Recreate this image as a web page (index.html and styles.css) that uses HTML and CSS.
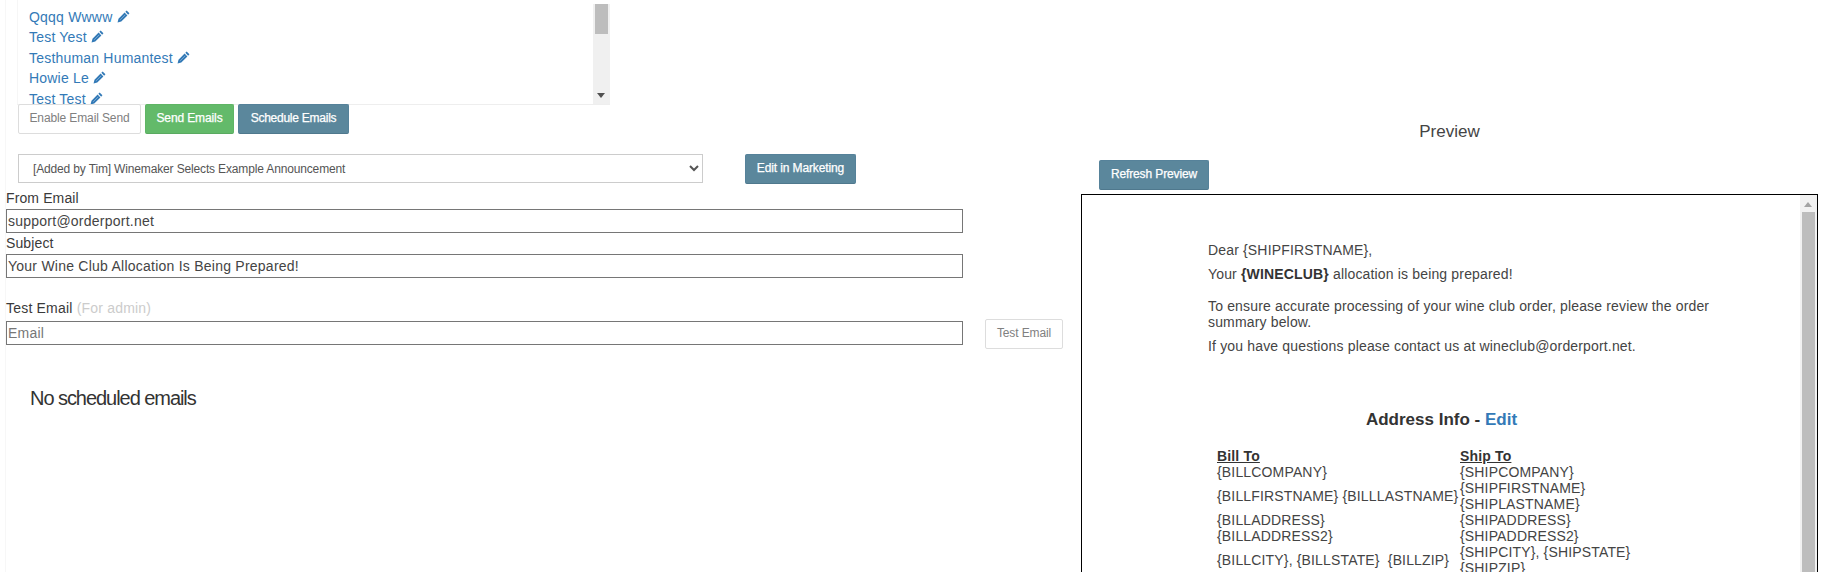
FILE: index.html
```html
<!DOCTYPE html>
<html lang="en">
<head>
<meta charset="utf-8">
<title>Email Preview</title>
<link rel="stylesheet" href="styles.css">
</head>
<body>
<svg class="defs" width="0" height="0" aria-hidden="true">
  <symbol id="pencil" viewBox="0 0 14 14">
    <path d="M10.4 .6 13.4 3.6 12 5 9 2Z M8.2 2.8 11.2 5.8 4.6 12.4 .6 13.4 1.6 9.4Z"/>
    <path class="slit" d="M3.4 10.6 8.8 5.2"/>
  </symbol>
</svg>
<div class="page">
  <section class="left">
    <div class="recipients">
      <ul class="names">
        <li><a href="#">Qqqq Wwww <svg class="pencil"><use href="#pencil"/></svg></a></li>
        <li><a href="#">Test Yest <svg class="pencil"><use href="#pencil"/></svg></a></li>
        <li><a href="#">Testhuman Humantest <svg class="pencil"><use href="#pencil"/></svg></a></li>
        <li><a href="#">Howie Le <svg class="pencil"><use href="#pencil"/></svg></a></li>
        <li><a href="#">Test Test <svg class="pencil"><use href="#pencil"/></svg></a></li>
      </ul>
      <div class="listbar">
        <div class="listthumb"></div>
        <div class="arrow-down"></div>
      </div>
    </div>
    <div class="actions">
      <button class="btn btn-plain w-enable">Enable Email Send</button>
      <button class="btn btn-green w-send">Send Emails</button>
      <button class="btn btn-teal w-schedule">Schedule Emails</button>
    </div>
    <div class="template-row">
      <select class="template">
        <option>[Added by Tim] Winemaker Selects Example Announcement</option>
      </select>
      <button class="btn btn-teal w-edit">Edit in Marketing</button>
    </div>
    <label class="lbl">From Email</label>
    <input class="field" type="text" value="support@orderport.net">
    <label class="lbl">Subject</label>
    <input class="field" type="text" value="Your Wine Club Allocation Is Being Prepared!">
    <label class="lbl lbl-test">Test Email <span class="muted">(For admin)</span></label>
    <div class="test-row">
      <input class="field" type="text" placeholder="Email">
      <button class="btn btn-plain w-test">Test Email</button>
    </div>
    <h4 class="none">No scheduled emails</h4>
  </section>
  <section class="right">
    <div class="preview-title">Preview</div>
    <button class="btn btn-teal refresh">Refresh Preview</button>
    <div class="frame">
      <div class="mail">
        <p class="p1">Dear {SHIPFIRSTNAME},</p>
        <p class="p2">Your <b>{WINECLUB}</b> allocation is being prepared!</p>
        <p class="p3">To ensure accurate processing of your wine club order, please review the order summary below.</p>
        <p class="p4">If you have questions please contact us at wineclub@orderport.net.</p>
        <h3 class="addr">Address Info - <a href="#">Edit</a></h3>
        <table class="addr-table">
          <tr><th>Bill To</th><th>Ship To</th></tr>
          <tr><td>{BILLCOMPANY}</td><td>{SHIPCOMPANY}</td></tr>
          <tr><td>{BILLFIRSTNAME} {BILLLASTNAME}</td><td>{SHIPFIRSTNAME} {SHIPLASTNAME}</td></tr>
          <tr><td>{BILLADDRESS}</td><td>{SHIPADDRESS}</td></tr>
          <tr><td>{BILLADDRESS2}</td><td>{SHIPADDRESS2}</td></tr>
          <tr><td>{BILLCITY}, {BILLSTATE}&nbsp; {BILLZIP}</td><td>{SHIPCITY}, {SHIPSTATE} {SHIPZIP}</td></tr>
        </table>
      </div>
      <div class="framebar">
        <div class="arrow-up"></div>
        <div class="framethumb"></div>
      </div>
    </div>
  </section>
</div>
</body>
</html>
```
FILE: styles.css
```css
* { box-sizing: border-box; }
html, body { margin: 0; padding: 0; height: 572px; overflow: hidden; background: #fff; }
body { font-family: "Liberation Sans", Arial, sans-serif; font-size: 14px; letter-spacing: 0.12px; color: #3a3a3a; }
.defs { position: absolute; }
.page { display: flex; height: 572px; overflow: hidden; }
.left { width: 1076px; flex: none; margin-left: 5px; border-left: 1px solid #f7f7f7; }
.right { flex: 1; display: flex; flex-direction: column; margin-right: 5px; min-width: 0; }

.recipients { display: flex; width: 593px; height: 105px; margin-left: 11px; border-bottom: 1px solid #eee; border-left: 1px solid #f6f6f6; overflow: hidden; }
.names { flex: 1; list-style: none; margin: 0; padding: 6.5px 0 0 11px; letter-spacing: 0.2px; }
.names li { height: 20.6px; line-height: 20px; white-space: nowrap; }
a { color: #337ab7; text-decoration: none; }
.pencil { width: 13px; height: 13px; fill: #337ab7; vertical-align: -1px; }
.slit { fill: none; stroke: #9dbfdd; stroke-width: .7; }
.listbar { width: 17px; margin-top: 4px; background: #f0f0f0; padding: 0 2px; position: relative; }
.listthumb { height: 30px; background: #bdbdbd; }
.arrow-down { position: absolute; left: 4px; bottom: 6px; border: 4px solid transparent; border-top: 5px solid #505050; border-bottom: 0; }

.btn { height: 30px; padding: 0 0 2px; font: 12px/1.5 "Liberation Sans", Arial, sans-serif; letter-spacing: -0.12px; border: 1px solid transparent; border-radius: 2px; white-space: nowrap; flex: none; }
.btn-plain { background: #fff; border-color: #ddd; color: #808080; }
.btn-green { background: #63ba6a; border-color: #5fb565; border-bottom-color: #59aa60; color: #fff; -webkit-text-stroke: 0.25px #fff; }
.btn-teal { background: #5b879c; border-color: #56829a; border-bottom-color: #4f788d; color: #fff; -webkit-text-stroke: 0.25px #fff; }
.w-enable { width: 123px; }
.w-send { width: 89px; }
.w-schedule { width: 111px; letter-spacing: -0.25px; }
.w-edit { width: 111px; }
.w-test { width: 78px; }

.actions { display: flex; gap: 4px; margin: -1px 0 0 12px; }
.template-row { display: flex; align-items: flex-start; margin: 20px 0 0 12px; }
.template { width: 685px; height: 29px; margin-right: 42px; padding: 0 10px; border: 1px solid #ccc; background: #fff; color: #555; font: 12px "Liberation Sans", Arial, sans-serif; letter-spacing: -0.15px; border-radius: 0; }

.lbl { display: block; height: 16px; line-height: 16px; }
.template-row + .lbl { margin-top: 6px; }
.field { display: block; width: 957px; height: 24px; margin: 3px 0 2px; padding: 1px; border: 1px solid #767676; color: #444; font: 14px "Liberation Sans", Arial, sans-serif; letter-spacing: 0.24px; border-radius: 0; background: #fff; flex: none; }
.field::placeholder { color: #777; opacity: 1; }
.lbl-test { margin-top: 22px; letter-spacing: 0.2px; }
.muted { color: #ccc; }
.test-row { display: flex; gap: 22px; align-items: flex-start; margin-top: 3px; }
.test-row .field { margin: 2px 0 0; }
.none { margin: 37px 0 0 24px; font-weight: 400; font-size: 20px; line-height: 24px; letter-spacing: -1.05px; color: #333; }

.preview-title { margin-top: 122px; text-align: center; font-size: 17px; line-height: 19px; letter-spacing: 0; color: #444; }
.refresh { width: 110px; align-self: flex-start; margin: 19px 0 0 18px; }
.frame { flex: 1; margin-top: 4px; border: 1px solid #000; border-bottom: 0; display: flex; min-height: 0; overflow: hidden; }
.mail { flex: 1; padding: 0 73px 0 126px; color: #444; letter-spacing: 0.16px; }
.mail p { margin: 0; line-height: 16px; }
.mail b { color: #333; }
.p1 { padding-top: 47px; }
.p2 { padding-top: 8px; }
.p3 { padding-top: 16px; }
.p4 { padding-top: 8px; }
.addr { margin: 56px 0 0; padding-right: 52px; text-align: center; font-size: 17px; line-height: 19px; letter-spacing: 0; color: #333; }
.addr-table { border-collapse: collapse; table-layout: fixed; margin: 19px 0 0 9px; width: 423px; }
.addr-table th, .addr-table td { padding: 0; text-align: left; line-height: 16px; font-size: 14px; vertical-align: middle; }
.addr-table th { text-decoration: underline; font-weight: 700; color: #333; }
.addr-table th:first-child, .addr-table td:first-child { width: 243px; }
.framebar { width: 17px; flex: none; padding: 0 2px; background: #f1f1f1; position: relative; }
.arrow-up { position: absolute; left: 4px; top: 7px; border: 4px solid transparent; border-bottom: 5px solid #a3a3a3; border-top: 0; }
.framethumb { margin-top: 17px; height: 400px; background: #bdbdbd; }
```
